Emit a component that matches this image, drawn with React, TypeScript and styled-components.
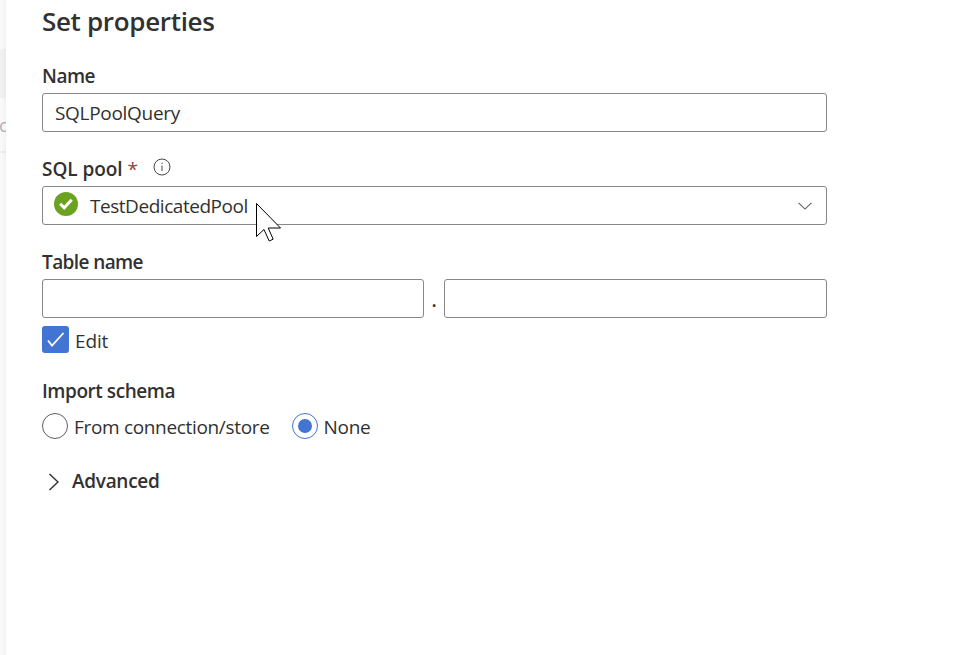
import React from 'react';
import styled, { createGlobalStyle } from 'styled-components';

const GlobalStyle = createGlobalStyle`
  * { box-sizing: border-box; }
  body {
    margin: 0;
    overflow: hidden;
    background: #fff;
    color: #323130;
    font: 400 19px/26px "Open Sans", "Noto Sans", sans-serif;
  }
`;

const Page = styled.div`
  display: flex;
  height: 655px;
  overflow: hidden;
`;

const Backdrop = styled.div`
  flex: 0 0 6px;
  display: flex;
  flex-direction: column;
  overflow: hidden;
  background: linear-gradient(90deg, #fbfbfb, #f2f2f2);
`;

const BackdropBand = styled.div<{ $height: number; $shade?: string }>`
  flex: 0 0 ${p => p.$height}px;
  overflow: hidden;
  background: ${p => p.$shade ?? 'transparent'};
`;

const BackdropText = styled.div`
  margin: 14px 0 0 -1px;
  color: #b2b2b4;
  font-size: 18px;
`;

const Panel = styled.main`
  flex: 1;
  padding: 3px 126px 0 36px;
  background: #fff;
`;

const Title = styled.h1`
  margin: 0 0 24px;
  font-size: 26px;
  line-height: 36px;
  font-weight: 600;
  letter-spacing: -0.33px;
`;

const Text = styled.span<{ $spacing?: number }>`
  letter-spacing: ${p => p.$spacing ?? 0}px;
  white-space: nowrap;
`;

const Field = styled.section`
  display: flex;
  flex-direction: column;
  gap: 4px;
  margin-bottom: 24px;
`;

const Label = styled.div`
  display: flex;
  height: 26px;
  font-weight: 600;
`;

const Required = styled.span`
  margin-left: 5px;
  color: #8f4140;
  font-weight: 400;
`;

const InfoIcon = styled.svg`
  width: 18px;
  height: 18px;
  margin: 2px 0 0 15px;
`;

const Box = styled.div`
  position: relative;
  display: flex;
  flex: 1;
  align-items: center;
  min-height: 39px;
  padding: 0 12px;
  border: 1px solid #8a8886;
  border-radius: 3px;
  background: #fff;
`;

const SchemaBox = styled(Box)`
  flex: 0 0 382px;
`;

const StatusIcon = styled.svg`
  width: 24px;
  height: 24px;
  margin: -3px 12px 0 -1px;
`;

const ChevronDown = styled.svg`
  width: 14px;
  height: 8px;
  margin: 1px 2px 0 auto;
`;

const Pointer = styled.svg`
  position: absolute;
  left: 213px;
  top: 15px;
  width: 26px;
  height: 40px;
  z-index: 1;
`;

const TableRow = styled.div`
  display: flex;
`;

const Dot = styled.span`
  width: 20px;
  padding-top: 8px;
  text-align: center;
  font-weight: 600;
`;

const Option = styled.label`
  display: flex;
  align-items: center;
`;

const EditOption = styled(Option)`
  gap: 6px;
  margin: -16px 0 25px;
  height: 27px;
  > span:last-child { padding-top: 2px; }
`;

const CheckBox = styled.span`
  display: flex;
  width: 27px;
  height: 27px;
  border-radius: 3px;
  background: #4275d2;
`;

const RadioRow = styled.div`
  display: flex;
  gap: 22px;
  margin-top: 9px;
`;

const RadioOption = styled(Option)`
  height: 26px;
  gap: 6px;
  > span:last-child { padding-top: 2px; }
`;

const Radio = styled.span<{ $checked?: boolean }>`
  display: flex;
  align-items: center;
  justify-content: center;
  width: 26px;
  height: 26px;
  border: 1px solid ${p => (p.$checked ? '#4275d2' : '#605e5c')};
  border-radius: 50%;
  &::after {
    content: '';
    width: 14px;
    height: 14px;
    border-radius: 50%;
    background: ${p => (p.$checked ? '#4275d2' : 'transparent')};
  }
`;

const Advanced = styled.div`
  display: flex;
  align-items: center;
  margin-top: 29px;
  padding-left: 6px;
  font-weight: 600;
  svg { width: 12px; height: 18px; margin: 1px 12px 0 0; }
`;

export default function App() {
  return (
    <>
      <GlobalStyle />
      <Page>
        <Backdrop>
          <BackdropBand $height={49} />
          <BackdropBand $height={49} $shade="rgba(0, 0, 0, 0.03)" />
          <BackdropBand $height={53}><BackdropText>c</BackdropText></BackdropBand>
          <BackdropBand $height={2} $shade="rgba(0, 0, 0, 0.05)" />
        </Backdrop>
        <Panel>
          <Title>Set properties</Title>
          <Field>
            <Label><Text $spacing={-0.5}>Name</Text></Label>
            <Box><Text $spacing={-0.3}>SQLPoolQuery</Text></Box>
          </Field>
          <Field>
            <Label>
              <Text $spacing={-0.05}>SQL pool</Text>
              <Required>*</Required>
              <InfoIcon viewBox="0 0 18 18" fill="none" stroke="#484644">
                <circle cx="9" cy="9" r="8" />
                <path d="M9 7.5v5.5" />
                <path d="M9 4.7v1.4" />
              </InfoIcon>
            </Label>
            <Box>
              <StatusIcon viewBox="0 0 24 24" fill="none">
                <circle cx="12" cy="12" r="12" fill="#6ba220" />
                <path d="M6.2 11.7l4 4.1 7.5-8" stroke="#fff" strokeWidth="3" />
              </StatusIcon>
              <Text $spacing={-0.46}>TestDedicatedPool</Text>
              <ChevronDown viewBox="0 0 14 8" fill="none" stroke="#605e5c" strokeWidth="1.1">
                <path d="M.6.8L7 7.1 13.4.8" />
              </ChevronDown>
              <Pointer viewBox="0 0 26 40">
                <path d="M.5 1.5v33l7.5-7 5.2 11.5 4-1.8-5-11.2h12.3z" fill="#fff" stroke="#000" />
              </Pointer>
            </Box>
          </Field>
          <Field>
            <Label><Text $spacing={-0.6}>Table name</Text></Label>
            <TableRow><SchemaBox /><Dot>.</Dot><Box /></TableRow>
          </Field>
          <EditOption>
            <CheckBox>
              <svg width="27" height="27" fill="none" stroke="#fff" strokeWidth="1.8">
                <path d="M6 14.5l4 5L21.5 7" />
              </svg>
            </CheckBox>
            <Text $spacing={-0.15}>Edit</Text>
          </EditOption>
          <Label><Text $spacing={-0.45}>Import schema</Text></Label>
          <RadioRow>
            <RadioOption><Radio /><Text $spacing={-0.33}>From connection/store</Text></RadioOption>
            <RadioOption><Radio $checked /><Text $spacing={-0.3}>None</Text></RadioOption>
          </RadioRow>
          <Advanced>
            <svg viewBox="0 0 12 18" fill="none" stroke="#323130" strokeWidth="1.4">
              <path d="M1.5 1l8.5 8-8.5 8" />
            </svg>
            <Text $spacing={-0.3}>Advanced</Text>
          </Advanced>
        </Panel>
      </Page>
    </>
  );
}
